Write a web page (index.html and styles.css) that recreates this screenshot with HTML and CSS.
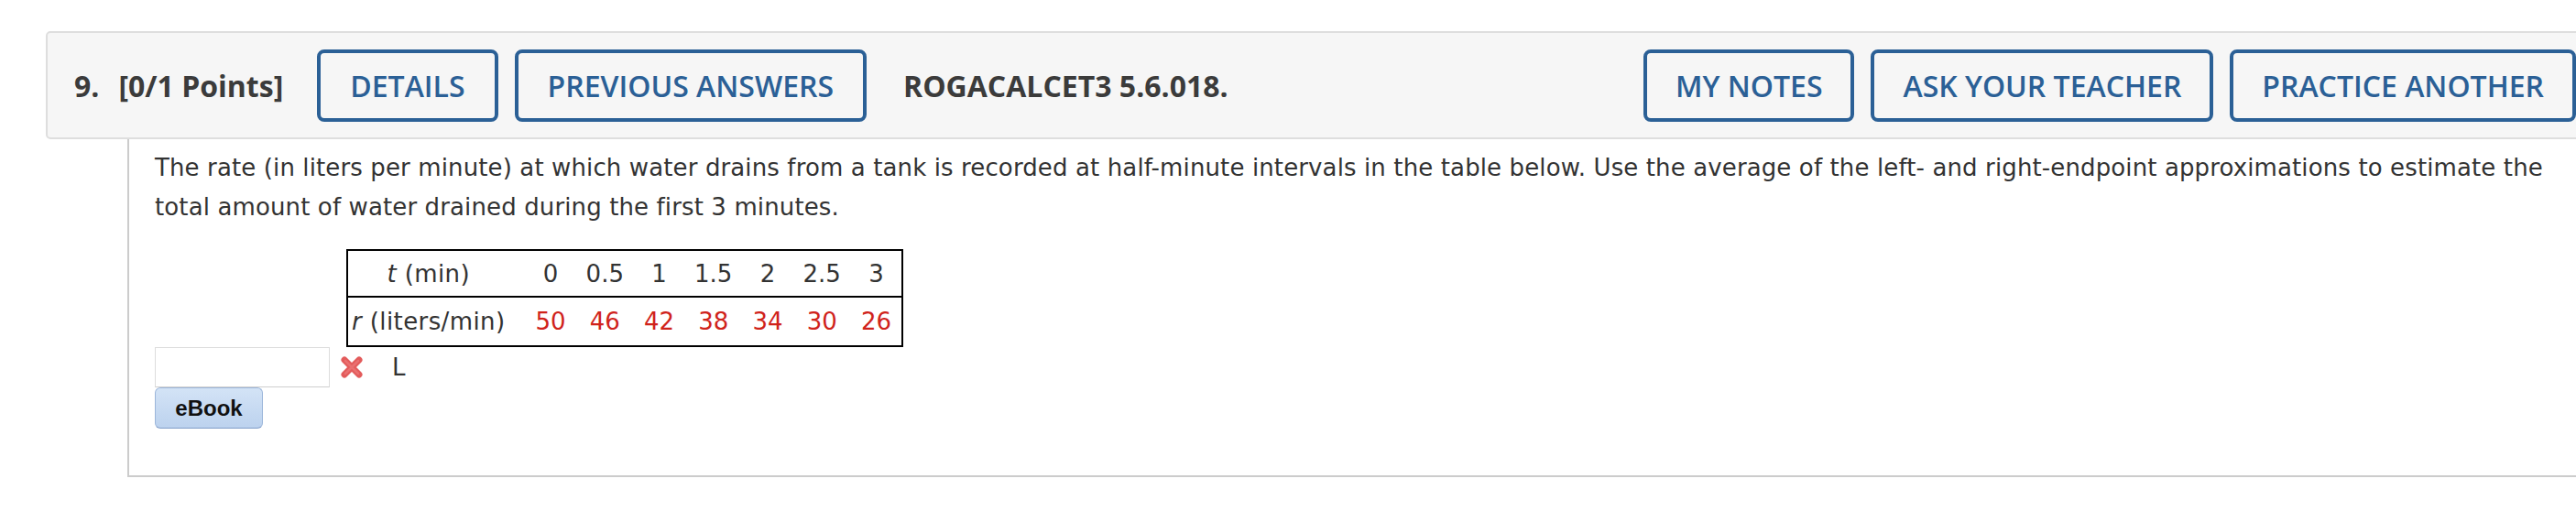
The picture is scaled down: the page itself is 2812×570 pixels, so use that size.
FILE: index.html
```html
<!DOCTYPE html>
<html>
<head>
<meta charset="utf-8">
<link rel="stylesheet" href="styles.css">
</head>
<body>
<div class="question">
  <div class="qhead">
    <div class="qnum">9.</div>
    <div class="qpoints">[0/1 Points]</div>
    <div class="btn">DETAILS</div>
    <div class="btn btn-gap">PREVIOUS ANSWERS</div>
    <div class="qid">ROGACALCET3 5.6.018.</div>
    <div class="right-btns">
      <div class="btn">MY NOTES</div>
      <div class="btn btn-gap">ASK YOUR TEACHER</div>
      <div class="btn btn-gap">PRACTICE ANOTHER</div>
    </div>
  </div>
  <div class="qbody">
    <p class="qtext">The rate (in liters per minute) at which water drains from a tank is recorded at half-minute intervals in the table below. Use the average of the left- and right-endpoint approximations to estimate the<br>total amount of water drained during the first 3 minutes.</p>
    <table class="data">
      <tr class="row-t">
        <td class="lbl"><i>t</i> (min)</td>
        <td>0</td><td>0.5</td><td>1</td><td>1.5</td><td>2</td><td>2.5</td><td>3</td>
      </tr>
      <tr class="row-r">
        <td class="lbl"><i>r</i> (liters/min)</td>
        <td class="red">50</td><td class="red">46</td><td class="red">42</td><td class="red">38</td><td class="red">34</td><td class="red">30</td><td class="red">26</td>
      </tr>
    </table>
    <div class="answer">
      <div class="ans-input"></div>
      <svg class="xmark" width="28" height="28" viewBox="0 0 28 28">
        <path d="M6 6 L22 22 M22 6 L6 22" stroke="#e35b5b" stroke-width="7" stroke-linecap="round"/>
        <path d="M7 7 L21 21 M21 7 L7 21" stroke="#ef7f7f" stroke-width="2.5" stroke-linecap="round" opacity="0.6"/>
      </svg>
      <span class="unit">L</span>
    </div>
    <div class="ebook">eBook</div>
  </div>
</div>
</body>
</html>
```
FILE: styles.css
```css
html, body {
  margin: 0;
  padding: 0;
  background: #ffffff;
  overflow: hidden;
}
body {
  width: 2812px;
  height: 570px;
}
.question {
  margin-left: 50px;
  padding-top: 34px;
  width: 2800px;
}
.qhead {
  display: flex;
  align-items: center;
  height: 114px;
  background: #f6f6f6;
  border: 2px solid #dedede;
  border-radius: 5px;
  padding-left: 29px;
  padding-right: 36px;
  font-family: "Open Sans", "Liberation Sans", sans-serif;
  font-size: 32px;
}
.qnum, .qpoints, .qid {
  font-weight: 700;
  color: #3b3b3b;
  white-space: nowrap;
}
.qpoints {
  margin-left: 21px;
  margin-right: 37px;
}
.qid {
  margin-left: 40px;
}
.btn {
  box-sizing: border-box;
  height: 79px;
  line-height: 71px;
  padding: 0 32px;
  border: 4px solid #2b6096;
  border-radius: 8px;
  color: #2b6096;
  font-weight: 600;
  white-space: nowrap;
}
.btn-gap {
  margin-left: 18px;
}
.right-btns {
  display: flex;
  margin-left: auto;
}
.right-btns .btn {
  padding: 0 31px;
}
.qbody {
  margin-left: 89px;
  border-left: 2px solid #cccccc;
  border-bottom: 2px solid #cccccc;
  padding: 10px 0 51px 28px;
  font-family: "DejaVu Sans", Verdana, sans-serif;
  font-size: 26px;
  color: #333333;
}
.qtext {
  margin: 0;
  line-height: 43px;
  letter-spacing: 0.12px;
}
.data {
  margin: 24px 0 0 209px;
  border-collapse: collapse;
  border: 2px solid #000000;
}
.data td {
  padding: 0 11px;
  text-align: center;
  white-space: nowrap;
}
.data td.lbl {
  padding: 0 22px 0 4px;
  letter-spacing: 0.4px;
}
.row-t td {
  height: 49px;
  border-bottom: 2px solid #000000;
}
.row-r td {
  height: 52px;
}
.red {
  color: #d0231b;
}
.answer {
  display: flex;
  align-items: center;
  height: 44px;
}
.ans-input {
  box-sizing: border-box;
  width: 191px;
  height: 44px;
  border: 1px solid #dddddd;
  border-bottom-color: #cfcfcf;
  background: #ffffff;
}
.xmark {
  margin-left: 10px;
}
.unit {
  margin-left: 30px;
  line-height: 44px;
}
.ebook {
  box-sizing: border-box;
  width: 118px;
  height: 45px;
  line-height: 43px;
  text-align: center;
  border: 1px solid #9cb6da;
  border-bottom-color: #7f9cc8;
  border-radius: 6px;
  background: linear-gradient(#d3e3f6, #bcd2ee);
  font-family: "Liberation Sans", Arial, sans-serif;
  font-weight: 700;
  font-size: 24px;
  color: #111111;
}
```
